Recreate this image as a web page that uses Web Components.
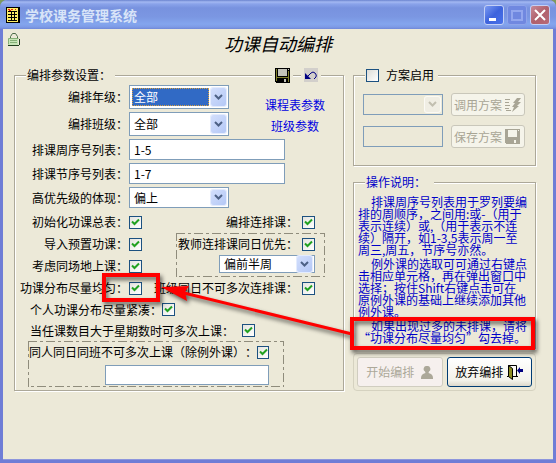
<!DOCTYPE html>
<html lang="zh-CN">
<head>
<meta charset="utf-8">
<title>学校课务管理系统</title>
<style>
  body {
    margin: 0;
    background: #7d9a5c;
    color: #000;
    font: 12px/16px "Noto Sans CJK SC", sans-serif;
    text-spacing-trim: space-all;
  }
</style>
</head>
<body>
<app-window caption="学校课务管理系统">
  <form-heading>功课自动编排</form-heading>
  <main-layout>
    <settings-panel slot="left"></settings-panel>
    <plan-panel></plan-panel>
    <help-panel></help-panel>
    <action-bar></action-bar>
  </main-layout>
  <callout-layer slot="overlay"></callout-layer>
</app-window>

<script>
  // Base class: attaches the shadow root and fills it from view()
  class ViewElement extends HTMLElement {
    constructor() {
      super();
      this.attachShadow({ mode: 'open' });
    }

    connectedCallback() {
      this.shadowRoot.innerHTML = this.view();
    }
  }

  const floppy = (line, body, plate) => `
    <svg width="15" height="15" viewBox="0 0 15 15" shape-rendering="crispEdges" aria-hidden="true">
      <path fill="${line}" d="M0 0h15v15H1L0 14z"/>
      <path fill="${body}" d="M1 1h1v12H1zM13 3h1v11h-1zM2 9h11v1H2z"/>
      <path fill="${plate}" d="M3 1h9v7H3z"/>
      <path fill="${plate}" d="M9 11h2v3H9zM13 1h1v1h-1z"/>
    </svg>`;

  class AppWindow extends ViewElement {
    view() {
      return `
        <style>
          :host {
            display: flex;
            flex-direction: column;
            position: relative;
            box-sizing: border-box;
            min-height: 100vh;
            border: solid #6f7dd6;
            border-width: 0 3px 3px;
            border-radius: 7px 7px 0 0;
            background: #ece9d8;
            box-shadow: inset 0 -1px #8d96dc;
          }
          header {
            display: flex;
            align-items: center;
            box-sizing: border-box;
            height: 29px;
            margin: 0 -3px;
            padding: 0 6px;
            gap: 3px;
            border-radius: 7px 7px 0 0;
            background: linear-gradient(#6a83cf 0, #a3b8f2 2px, #8aa3ea 4px, #7892df 8px, #7b97e2 17px, #83a5ee 24px, #7e9be6 27px, #6f88d8 29px);
          }
          h1 {
            flex: 1;
            margin: 0 0 0 2px;
            color: #d8e4f8;
            font-size: 14px;
            line-height: 20px;
            font-weight: bold;
          }
          button {
            box-sizing: border-box;
            width: 20px;
            height: 20px;
            padding: 0;
            border: 1px solid #c4d0f6;
            border-radius: 3px;
            background: linear-gradient(135deg, #7b9af2, #3d63dc 50%, #4a72ea);
          }
          button svg { display: block; }
          .max { background: #7088e0; border-color: #8fa4ea; }
          .close { background: linear-gradient(135deg, #c88a98, #b0606c 50%, #b86a78); }
        </style>
        <header>
          <svg width="14" height="16" viewBox="0 0 14 16" shape-rendering="crispEdges" aria-hidden="true">
            <path d="M0 0h14v16H0z"/>
            <path fill="#ffee66" d="M1 1h11v14H1z"/>
            <path d="M2 4h9v1H2zM2 7h9v1H2zM2 10h9v1H2zM2 13h9v1H2zM5 4h1v10H5zM8 4h1v10H8z"/>
            <path fill="#e02010" d="M2 2h2v1h1v1H3V3H2zM5 2h2v1H5zM9 2h1v1H9z"/>
          </svg>
          <h1>${this.getAttribute('caption')}</h1>
          <button type="button" aria-label="最小化"><svg width="18" height="18"><path fill="#fff" d="M4 12h7v3H4z"/></svg></button>
          <button type="button" class="max" aria-label="最大化" disabled><svg width="18" height="18"><path fill="none" stroke="#93a7ee" stroke-width="2" d="M4 5h10v9H4z"/></svg></button>
          <button type="button" class="close" aria-label="关闭"><svg width="18" height="18"><path stroke="#fff" stroke-width="2" d="M4 4l10 10M14 4L4 14"/></svg></button>
        </header>
        <slot></slot>
        <slot name="overlay"></slot>`;
    }
  }

  class FormHeading extends ViewElement {
    view() {
      return `
        <style>
          :host {
            display: grid;
            grid-template-columns: 1fr auto 1fr;
            height: 39px;
            padding: 0 5px;
          }
          svg { margin-top: 4px; }
          h2 {
            margin: 0;
            font-size: 18px;
            line-height: 28px;
            font-weight: normal;
            font-style: italic;
          }
        </style>
        <svg width="12" height="13" viewBox="0 0 12 13" aria-hidden="true">
          <path fill="none" stroke="#4a6a48" d="M2.500 6V3.500l2-3h3l2 3V6"/>
          <path fill="#c8e6b8" d="M1 5h9v7H1z"/>
          <path fill="none" stroke="#86b078" d="M.5 11.500v-6h10M2 7.500h7M2 9.500h7"/>
          <path fill="none" stroke="#23401f" d="M0 12.500h11M11.500 6v6"/>
        </svg>
        <h2><slot></slot></h2>`;
    }
  }

  class MainLayout extends ViewElement {
    view() {
      return `
        <style>
          :host {
            display: grid;
            grid-template-columns: minmax(330px, 330fr) minmax(183px, 183fr);
            align-items: start;
            gap: 9px;
            padding: 0 17px 24px 11px;
          }
          .side { display: flex; flex-direction: column; }
        </style>
        <slot name="left"></slot>
        <div class="side"><slot></slot></div>`;
    }
  }

  // Etched frame with a caption row that lies on its top edge
  class GroupBox extends ViewElement {
    view() {
      return `
        <style>
          :host { display: block; }
          header {
            display: flex;
            align-items: center;
            position: relative;
            height: 14px;
            margin-bottom: -7px;
            padding: 0 23px 0 12px;
          }
          .frame {
            border: 1px solid #aca899;
            box-shadow: 1px 1px #fff, inset 1px 1px #fff;
          }
          ::slotted([slot]) {
            background: #ece9d8;
          }
        </style>
        <div role="group">
          <header><slot name="caption"></slot></header>
          <div class="frame"><slot></slot></div>
        </div>`;
    }
  }

  class DashBox extends ViewElement {
    view() {
      return `
        <style>
          :host { display: block; position: relative; box-sizing: border-box; }
          svg { position: absolute; inset: 0; width: 100%; height: 100%; pointer-events: none; }
        </style>
        <svg shape-rendering="crispEdges" aria-hidden="true">
          <rect x="0" y="0" width="100%" height="100%" fill="none" stroke="#8f8c7c" stroke-width="2" stroke-dasharray="9 3 3 3"/>
        </svg>
        <slot></slot>`;
    }
  }

  class SelectField extends ViewElement {
    view() {
      const label = this.getAttribute('label') || '';
      const off = this.hasAttribute('disabled');
      return `
        <style>
          :host { display: flex; align-items: center; height: 24px; }
          label { width: 113px; margin-right: 1px; text-align: right; white-space: nowrap; }
          .box {
            display: flex;
            flex: 1;
            box-sizing: border-box;
            height: 100%;
            min-width: 0;
            padding: var(--select-pad, 2px) 2px;
            gap: 2px;
            border: 1px solid #7f9db9;
            background: ${off ? '#ece9d8' : '#fff'};
          }
          select {
            flex: 1;
            min-width: 0;
            padding: 0 2px;
            appearance: none;
            border: 0;
            outline: 0;
            background: transparent;
            color: inherit;
            font: inherit;
          }
          :host([active]) select {
            padding: 0 1px;
            border: 1px dotted #d8a040;
            background: #316ac5;
            color: #fff;
          }
          .arrow {
            display: grid;
            place-items: center;
            width: 15px;
            border-radius: 2px;
            background: ${off ? '#f0eee4' : 'linear-gradient(135deg, #d3dffc, #b4c8f6)'};
            box-shadow: 0 0 0 1px ${off ? '#fbfaf5' : '#e4ecfd'};
          }
        </style>
        ${label ? `<label for="field">${label}</label>` : ''}
        <div class="box">
          <select id="field" ${off ? 'disabled aria-label="方案"' : label ? '' : 'aria-label="连排课时段"'}>
            <option>${this.getAttribute('value') || ''}</option>
          </select>
          <span class="arrow">
            <svg width="9" height="7" viewBox="0 0 9 7"><path fill="none" stroke="${off ? '#c2bfb0' : '#4d6185'}" stroke-width="2" d="M1 1l3.500 3.500L8 1"/></svg>
          </span>
        </div>`;
    }
  }

  class TextField extends ViewElement {
    view() {
      const label = this.getAttribute('label');
      const off = this.hasAttribute('disabled');
      return `
        <style>
          :host { display: flex; align-items: center; height: 21px; }
          label { width: 113px; margin-right: 1px; text-align: right; white-space: nowrap; }
          input {
            flex: 1;
            box-sizing: border-box;
            min-width: 0;
            height: 100%;
            padding: 0 4px;
            border: 1px solid #7f9db9;
            background: ${off ? '#ece9d8' : '#fff'};
            color: inherit;
            font: inherit;
          }
        </style>
        ${label ? `<label for="field">${label}</label>` : ''}
        <input id="field" type="text" value="${this.getAttribute('value') || ''}"
          ${label ? '' : `aria-label="${this.getAttribute('hint')}"`} ${off ? 'disabled' : ''}>`;
    }
  }

  class CheckField extends ViewElement {
    view() {
      return `
        <style>
          :host { display: flex; align-items: center; height: 22px; }
          label { white-space: nowrap; }
          input {
            box-sizing: border-box;
            width: 13px;
            height: 13px;
            margin: 0 0 0 var(--check-gap, 1px);
            appearance: none;
            border: 1px solid #1c5180;
            background: linear-gradient(135deg, #dcdcd7, #fff);
          }
          input:checked {
            background: url("data:image/svg+xml,%3Csvg xmlns='http://www.w3.org/2000/svg' width='11' height='11'%3E%3Cpath fill='none' stroke='%2321a121' stroke-width='2' d='M2 4.500L4.500 7L9 2.500'/%3E%3C/svg%3E"), linear-gradient(135deg, #e4e4df, #fff);
          }
          :host([box-first]) { gap: 7px; height: 14px; flex-direction: row-reverse; }
          :host([box-first]) input { margin: 0; }
        </style>
        <label for="check"><slot></slot></label>
        <input id="check" type="checkbox" ${this.hasAttribute('checked') ? 'checked' : ''}>`;
    }
  }

  class SettingsPanel extends ViewElement {
    view() {
      return `
        <style>
          :host { display: block; }
          .tool { display: flex; height: 15px; padding: 0 3px; border: 0; }
          .tool svg { display: block; }
          .save { margin-left: auto; }
          .undo { margin-left: 8px; }
          .caption { padding: 0 4px 0 1px; }
          .fields { display: flex; flex-direction: column; gap: 3px; padding-top: 9px; }
          .fields text-field { width: 270px; }
          .pair { display: flex; }
          .selects { display: flex; flex-direction: column; gap: 3px; }
          select-field.wide { width: 214px; }
          .links {
            display: flex;
            flex: 1;
            flex-direction: column;
            align-items: center;
            gap: 5px;
            padding: 12px 0 0 18px;
          }
          a { color: #0000e0; text-decoration: none; }
          .short { height: 21px; }
          .checks { display: grid; grid-template-columns: 127px 183px; padding-top: 3px; }
          .col check-field { justify-content: flex-end; }
          .right { --check-gap: 4px; }
          .right > check-field { padding-right: 10px; }
          .right dash-box { width: 149px; height: 44px; margin-left: auto; padding-right: 10px; }
          .right select-field { --select-pad: 0; width: 96px; height: 18px; margin-left: auto; }
          .more { padding: 0 0 3px 13px; }
          .more > check-field { height: 21px; padding-left: 2px; }
          .more > .even { --check-gap: 0px; }
          .more > .apart { --check-gap: 8px; }
          .more dash-box { width: 256px; height: 46px; padding: 0 15px 0 1px; --check-gap: 0px; }
          .more text-field { width: 164px; height: 20px; margin: 2px 0 0 auto; }
        </style>
        <group-box>
          <span slot="caption" class="caption">编排参数设置：</span>
          <button slot="caption" type="button" class="tool save" aria-label="保存">${floppy('#000', '#80802a', '#c4c4ba')}</button>
          <button slot="caption" type="button" class="tool undo" aria-label="撤消">
            <svg width="14" height="14" viewBox="0 0 14 14">
              <path fill="#d2cfcb" d="M0 0h14v14H0z"/>
              <path fill="#000080" d="M1 5v6h6z"/>
              <path fill="none" stroke="#000080" d="M4 8l3-3q2-2 4 0t1 4l-2 2"/>
            </svg>
          </button>
          <div class="fields">
            <div class="pair">
              <div class="selects">
                <select-field class="wide" label="编排年级：" value="全部" active></select-field>
                <select-field class="wide" label="编排班级：" value="全部"></select-field>
              </div>
              <nav class="links">
                <a href="#course">课程表参数</a>
                <a href="#class">班级参数</a>
              </nav>
            </div>
            <text-field label="排课周序号列表：" value="1-5"></text-field>
            <text-field label="排课节序号列表：" value="1-7"></text-field>
            <select-field class="wide short" label="高优先级的体现：" value="偏上"></select-field>
          </div>
          <div class="checks">
            <div class="col">
              <check-field checked>初始化功课总表：</check-field>
              <check-field checked>导入预置功课：</check-field>
              <check-field checked>考虑同场地上课：</check-field>
              <check-field checked>功课分布尽量均匀：</check-field>
            </div>
            <div class="col right">
              <check-field checked>编排连排课：</check-field>
              <dash-box>
                <check-field checked>教师连排课同日优先：</check-field>
                <select-field value="偏前半周"></select-field>
              </dash-box>
              <check-field checked>班级同日不可多次连排课：</check-field>
            </div>
          </div>
          <div class="more">
            <check-field class="even" checked>个人功课分布尽量紧凑：</check-field>
            <check-field class="apart" checked>当任课数目大于星期数时可多次上课：</check-field>
            <dash-box>
              <check-field checked>同人同日同班不可多次上课（除例外课）：</check-field>
              <text-field hint="例外课"></text-field>
            </dash-box>
          </div>
        </group-box>`;
    }
  }

  class PlanPanel extends ViewElement {
    view() {
      return `
        <style>
          :host { display: block; }
          check-field { padding: 0 4px 0 1px; }
          .grid {
            display: grid;
            grid-template-columns: 80px 74px;
            align-items: center;
            gap: 9px 8px;
            padding: 17px 9px;
          }
          .grid select-field, .grid text-field { height: 21px; }
          button {
            display: flex;
            align-items: center;
            box-sizing: border-box;
            height: 23px;
            padding: 0 2px;
            gap: 3px;
            border: 1px solid #c9c7ba;
            border-radius: 3px;
            background: #f5f4ea;
            color: #a8a595;
            font: inherit;
            white-space: nowrap;
          }
        </style>
        <group-box>
          <check-field slot="caption" box-first>方案启用</check-field>
          <div class="grid">
            <select-field disabled></select-field>
            <button type="button" disabled>调用方案
              <svg width="16" height="14" viewBox="0 0 16 14" aria-hidden="true">
                <path stroke="#a8a595" d="M0 1.500h5M0 4.500h4M0 7.500h5M0 10.500h4M1 12.500h5"/>
                <path fill="#a8a595" d="M12 0h4l-3 4h3l-4 4h2l-7 6 2-5H7l3-4H8z"/>
              </svg>
            </button>
            <text-field hint="方案名称" disabled></text-field>
            <button type="button" disabled>保存方案${floppy('#a8a595', '#a8a595', '#f5f4ea')}</button>
          </div>
        </group-box>`;
    }
  }

  class HelpPanel extends ViewElement {
    view() {
      return `
        <style>
          :host { display: block; margin-top: 9px; color: #0000c8; }
          .text { padding: 13px 4px 4px; line-height: 12px; white-space: nowrap; }
          .caption { padding: 0 8px 0 1px; }
          p { margin: 0 0 2px; text-indent: 13px; }
          p:last-child { margin: 0; }
        </style>
        <group-box>
          <span slot="caption" class="caption">操作说明：</span>
          <div class="text">
            <p>排课周序号列表用于罗列要编<br>排的周顺序，之间用:或-（用于<br>表示连续）或,（用于表示不连<br>续）隔开，如1-3,5表示周一至<br>周三,周五，节序号亦然。</p>
            <p>例外课的选取可可通过右键点<br>击相应单元格，再在弹出窗口中<br>选择；按住Shift右键点击可在<br>原例外课的基础上继续添加其他<br>例外课。</p>
            <p>如果出现过多的未排课，请将<br>“功课分布尽量均匀”勾去掉。</p>
          </div>
        </group-box>`;
    }
  }

  class ActionBar extends ViewElement {
    view() {
      return `
        <style>
          :host {
            display: flex;
            gap: 4px;
            margin-top: 4px;
            padding: 3px;
            border: 1px solid #d5d2c0;
            border-radius: 4px;
          }
          button {
            display: flex;
            flex: 1;
            align-items: center;
            justify-content: center;
            height: 30px;
            padding: 0;
            gap: 4px;
            border: 1px solid #003c74;
            border-radius: 3px;
            background: linear-gradient(#fff, #f3f2ea 80%, #dcd8cb);
            color: #000;
            font: inherit;
            white-space: nowrap;
          }
          button:disabled {
            gap: 7px;
            border-color: #d0cdc0;
            background: #f6f0ee;
            color: #aca899;
          }
        </style>
        <button type="button" disabled>开始编排
          <svg width="12" height="13" viewBox="0 0 12 13" aria-hidden="true">
            <path fill="#aca899" d="M6 0a3 3 0 0 1 2 5.500L7.500 7Q12 8 12 12v1H0v-1q0-4 4.500-5L4 5.500A3 3 0 0 1 6 0z"/>
          </svg>
        </button>
        <button type="button">放弃编排
          <svg width="16" height="15" viewBox="0 0 16 15" aria-hidden="true">
            <path fill="none" stroke="#000" d="M1.500 11V.500h8V11M0 11.500h11"/>
            <path fill="#8c8c20" stroke="#000" d="M1.500.500l4 3v11l-4-3z"/>
            <path fill="#000080" d="M10 5.500L13 2v2h3v3h-3v2z"/>
          </svg>
        </button>`;
    }
  }

  // Red marks that link the option with its explanation
  class CalloutLayer extends ViewElement {
    view() {
      return `
        <style>
          :host { position: absolute; top: 0; left: -3px; pointer-events: none; }
          svg { display: block; filter: drop-shadow(2px 3px 2px rgba(0, 0, 0, .6)); }
        </style>
        <svg width="556" height="400" viewBox="0 0 556 400" aria-hidden="true">
          <path fill="none" stroke="#f00" stroke-width="3" d="M352 334L184 293"/>
          <path fill="#f00" d="M161 287l28-1-4 6 2 9z"/>
          <path fill="none" stroke="#f00" stroke-width="4" d="M104 275h54v25h-54zM352 319h181v29H352z"/>
        </svg>`;
    }
  }

  customElements.define('app-window', AppWindow);
  customElements.define('form-heading', FormHeading);
  customElements.define('main-layout', MainLayout);
  customElements.define('group-box', GroupBox);
  customElements.define('dash-box', DashBox);
  customElements.define('select-field', SelectField);
  customElements.define('text-field', TextField);
  customElements.define('check-field', CheckField);
  customElements.define('settings-panel', SettingsPanel);
  customElements.define('plan-panel', PlanPanel);
  customElements.define('help-panel', HelpPanel);
  customElements.define('action-bar', ActionBar);
  customElements.define('callout-layer', CalloutLayer);
</script>
</body>
</html>
